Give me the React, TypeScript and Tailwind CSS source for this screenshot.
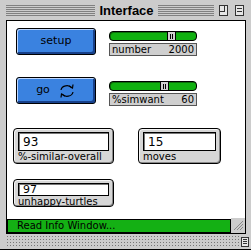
import React from 'react';

const geneva = { fontFamily: '"DejaVu Sans", Verdana, sans-serif' };

function Stripes({ className }: { className: string }) {
  return (
    <div className={`flex h-[11px] shrink-0 flex-col justify-between ${className}`}>
      {Array.from({ length: 6 }).map((_, i) => (
        <div key={i} className="h-px bg-[#808080]" />
      ))}
    </div>
  );
}

function Button({ label, icon }: { label: string; icon?: boolean }) {
  return (
    <div className="h-[27px] w-[80px] rounded-[3px] border border-black bg-[#3a82e0] shadow-[inset_1px_1px_0_#bcd6ff,inset_-2px_-2px_0_#17408a]">
      <div className="flex h-full items-center justify-center gap-2 text-[11px] text-black" style={geneva}>
        <span>{label}</span>
        {icon && (
          <svg width="18" height="14" viewBox="0 0 18 14" fill="none" stroke="black" strokeWidth="1.2">
            <path d="M3 6 A6 5 0 0 1 14 4" />
            <path d="M11 2 L14.5 4 L15 0.5" />
            <path d="M15 8 A6 5 0 0 1 4 10" />
            <path d="M7 12 L3.5 10 L3 13.5" />
          </svg>
        )}
      </div>
    </div>
  );
}

function Slider({ name, value, pos }: { name: string; value: string; pos: number }) {
  return (
    <div className="flex w-[88px] flex-col gap-[2px]">
      <div className="relative h-[10px] rounded-[4px] border border-black bg-[#10b010] shadow-[inset_1px_1px_0_#0a700a]">
        <div
          className="absolute top-[-1px] flex h-[10px] w-[9px] items-center justify-center gap-[1px] border border-black bg-[#d0d0d0]"
          style={{ left: pos }}
        >
          <div className="h-[5px] w-px bg-black" />
          <div className="h-[5px] w-px bg-black" />
        </div>
      </div>
      <div
        className="flex h-[13px] items-center justify-between border border-[#555] bg-[#cfcfcf] px-[2px] text-[10px] leading-none text-black"
        style={geneva}
      >
        <span>{name}</span>
        <span>{value}</span>
      </div>
    </div>
  );
}

function Monitor({
  label,
  value,
  w,
  h,
  box,
  size,
}: {
  label: string;
  value: string;
  w: number;
  h: number;
  box: number;
  size: string;
}) {
  return (
    <div
      className="flex flex-col overflow-hidden rounded-[4px] border border-black bg-[#d6d6d6] px-[4px] pt-[3px] shadow-[inset_1px_1px_0_#f4f4f4,inset_-1px_-1px_0_#8a8a8a]"
      style={{ width: w, height: h }}
    >
      <div
        className={`flex shrink-0 items-center overflow-hidden border border-black bg-white pl-[4px] leading-none text-black shadow-[inset_1px_1px_0_#777] ${size}`}
        style={{ ...geneva, height: box }}
      >
        {value}
      </div>
      <div className="pt-px text-[10px] leading-[10px] text-black" style={geneva}>
        {label}
      </div>
    </div>
  );
}

export default function App() {
  return (
    <div className="flex h-[251px] w-[251px] flex-col overflow-hidden bg-[#cccccc]">
      <div className="flex h-[20px] shrink-0 items-center pl-[6px]">
        <Stripes className="w-[89px]" />
        <div
          className="w-[63px] shrink-0 text-center text-[13px] font-bold leading-none text-black"
          style={{ fontFamily: '"Liberation Sans", Arial, sans-serif' }}
        >
          Interface
        </div>
        <Stripes className="w-[56px]" />
        <div className="ml-[5px] h-[11px] w-[9px] shrink-0 border border-[#333] bg-[#e6e6e6]">
          <div className="h-[6px] w-[5px] border-r border-b border-[#333]" />
        </div>
        <div className="ml-[7px] flex h-[11px] w-[9px] shrink-0 flex-col justify-center gap-[2px] border border-[#333] bg-[#e6e6e6] px-px">
          <div className="h-px bg-[#333]" />
          <div className="h-px bg-[#333]" />
        </div>
      </div>

      <div className="ml-[6px] mr-[5px] flex h-[214px] shrink-0 flex-col border border-black bg-white">
        <div className="ml-[9px] mt-[7px] flex items-start gap-[13px]">
          <Button label="setup" />
          <div className="mt-[3px]">
            <Slider name="number" value="2000" pos={57} />
          </div>
        </div>
        <div className="ml-[9px] mt-[21px] flex items-start gap-[13px]">
          <Button label="go" icon />
          <div className="mt-[4px]">
            <Slider name="%simwant" value="60" pos={50} />
          </div>
        </div>
        <div className="ml-[6px] mt-[22px] flex items-start gap-[24px]">
          <Monitor label="%-similar-overall" value="93" w={101} h={36} box={19} size="text-[12px]" />
          <Monitor label="moves" value="15" w={83} h={36} box={19} size="text-[12px]" />
        </div>
        <div className="ml-[6px] mt-[15px]">
          <Monitor label="unhappy-turtles" value="97" w={101} h={28} box={13} size="text-[11px]" />
        </div>
        <div className="mt-auto flex items-end">
          <div
            className="flex h-[14px] w-[224px] shrink-0 items-center border border-black bg-[#14b014] pl-[9px] text-[10px] leading-none text-black"
            style={geneva}
          >
            Read Info Window...
          </div>
          <div className="flex h-[15px] flex-1 items-center justify-center bg-[#cccccc]">
            <svg width="11" height="11" viewBox="0 0 11 11" stroke="#888" strokeWidth="1">
              <path d="M1 10 L10 1 M4 10 L10 4 M7 10 L10 7" />
            </svg>
          </div>
        </div>
      </div>

      <div className="mx-[6px] mt-[1px] flex h-[13px] shrink-0 items-center">
        <svg className="h-[13px] flex-1" aria-hidden>
          <defs>
            <pattern id="dots" width="3" height="3" patternUnits="userSpaceOnUse">
              <rect x="1" y="1" width="1" height="1" fill="#777" />
            </pattern>
          </defs>
          <rect x="0" y="1" width="100%" height="11" fill="url(#dots)" />
        </svg>
        <div className="mr-[-4px] ml-[1px] flex h-[10px] w-[8px] flex-col justify-center gap-[1px] border border-[#333] bg-[#e6e6e6] px-px">
          <div className="h-px bg-[#333]" />
          <div className="h-px bg-[#333]" />
          <div className="h-px bg-[#333]" />
        </div>
      </div>
      <div className="mt-[1px] h-[3px] shrink-0 border-t border-black bg-white" />
    </div>
  );
}
